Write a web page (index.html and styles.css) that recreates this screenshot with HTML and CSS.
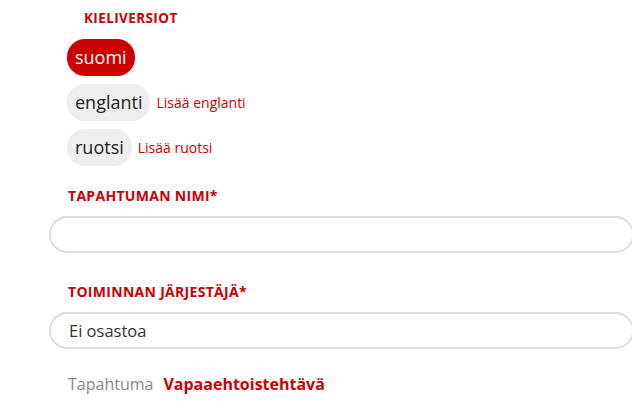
FILE: index.html
```html
<!DOCTYPE html>
<html lang="fi">
<head>
    <meta charset="UTF-8">
    <meta name="viewport" content="width=device-width, initial-scale=1.0">
    <link rel="stylesheet" href="styles.css">
    <title>Tapahtuma</title>
</head>
<body>
    <form class="eventForm">
        <div class="field">
            <h3 class="label langLabel">KIELIVERSIOT</h3>
            <div class="langList">
                <div class="langRow">
                    <span class="langPill active">suomi</span>
                </div>
                <div class="langRow">
                    <span class="langPill">englanti</span>
                    <a class="addLang" href="#">Lisää englanti</a>
                </div>
                <div class="langRow">
                    <span class="langPill">ruotsi</span>
                    <a class="addLang" href="#">Lisää ruotsi</a>
                </div>
            </div>
        </div>

        <div class="field">
            <label class="label" for="eventName">TAPAHTUMAN NIMI*</label>
            <input class="textInput" id="eventName" type="text">
        </div>

        <div class="field">
            <label class="label" for="organizer">TOIMINNAN JÄRJESTÄJÄ*</label>
            <input class="textInput" id="organizer" type="text" value="Ei osastoa">
        </div>

        <div class="typeRow">
            <span class="typeOption">Tapahtuma</span>
            <span class="typeOption selected">Vapaaehtoistehtävä</span>
        </div>
    </form>
</body>
</html>
```

FILE: styles.css
```css
:root {
    --red: #cc0000;
    --pill-bg: #eeeeee;
    --border: #dddddd;
    --text: #222222;
    --muted: #888888;
}

body {
    font-family: 'Open Sans', sans-serif;
    background-color: white;
    color: var(--text);
    margin: 0;
    overflow: hidden;
}

.eventForm {
    width: 585px;
    padding: 0 0 0 49px;
}

.label {
    display: block;
    margin: 0 0 0 19px;
    font-size: 14px;
    line-height: 18px;
    font-weight: 700;
    letter-spacing: 0.3px;
    color: var(--red);
}

.langLabel {
    padding-top: 9px;
    margin-left: 35px;
    font-size: 13.5px;
    letter-spacing: 0.4px;
}

.langList {
    display: flex;
    flex-direction: column;
    gap: 8px;
    margin: 12px 0 0 18px;
}

.langRow {
    display: flex;
    align-items: center;
    gap: 6px;
}

.langPill {
    display: inline-block;
    height: 37px;
    line-height: 36px;
    padding: 0 8px;
    border-radius: 18px;
    background-color: var(--pill-bg);
    font-size: 18px;
    color: var(--text);
}

.langPill.active {
    background-color: var(--red);
    color: white;
}

.addLang {
    font-size: 14px;
    color: var(--red);
    text-decoration: none;
}

.field + .field {
    margin-top: 21px;
}

.textInput {
    display: block;
    width: 100%;
    height: 37px;
    margin-top: 11px;
    padding: 0 18px;
    box-sizing: border-box;
    border: 2px solid var(--border);
    border-radius: 19px;
    font-family: inherit;
    font-size: 16.5px;
    color: #333;
}

.field:nth-child(3) {
    margin-top: 30px;
}

.typeRow {
    display: flex;
    gap: 10px;
    margin: 24px 0 0 19px;
    font-size: 16px;
}

.typeOption {
    color: var(--muted);
}

.typeOption.selected {
    font-weight: 700;
    color: var(--red);
}
```
